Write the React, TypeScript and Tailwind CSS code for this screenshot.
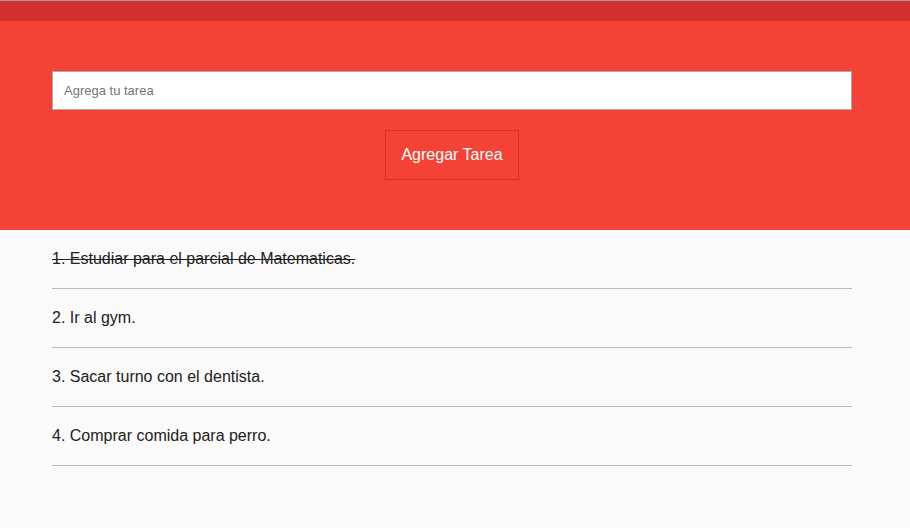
const tasks = [
  { id: 1, text: 'Estudiar para el parcial de Matematicas.', done: true },
  { id: 2, text: 'Ir al gym.', done: false },
  { id: 3, text: 'Sacar turno con el dentista.', done: false },
  { id: 4, text: 'Comprar comida para perro.', done: false },
];

export default function App() {
  return (
    <div className="min-h-[528px] bg-[#fafafa] font-['Liberation_Sans',Arial,sans-serif]">
      <div className="h-[21px] border-t border-[#9e9e9e] bg-[#d32f2f]" />
      <header className="bg-[#f44336] pb-[50px] pt-[50px]">
        <div className="ml-[52px] flex w-[800px] flex-col items-center">
          <input
            type="text"
            placeholder="Agrega tu tarea"
            className="h-[39px] w-full border border-[#a9a9a9] bg-white px-[11px] text-[13px] text-[#333] outline-none placeholder:text-[#757575]"
          />
          <button
            type="button"
            className="mt-[20px] h-[50px] w-[134px] border border-[#d32f2f] text-[16px] text-white"
          >
            Agregar Tarea
          </button>
        </div>
      </header>
      <ul className="ml-[52px] w-[800px]">
        {tasks.map((t) => (
          <li
            key={t.id}
            className={`border-b border-[#bdbdbd] py-[19px] text-[16px] leading-[20px] text-[#212121] ${
              t.done ? 'line-through' : ''
            }`}
          >
            {t.id}. {t.text}
          </li>
        ))}
      </ul>
    </div>
  );
}
